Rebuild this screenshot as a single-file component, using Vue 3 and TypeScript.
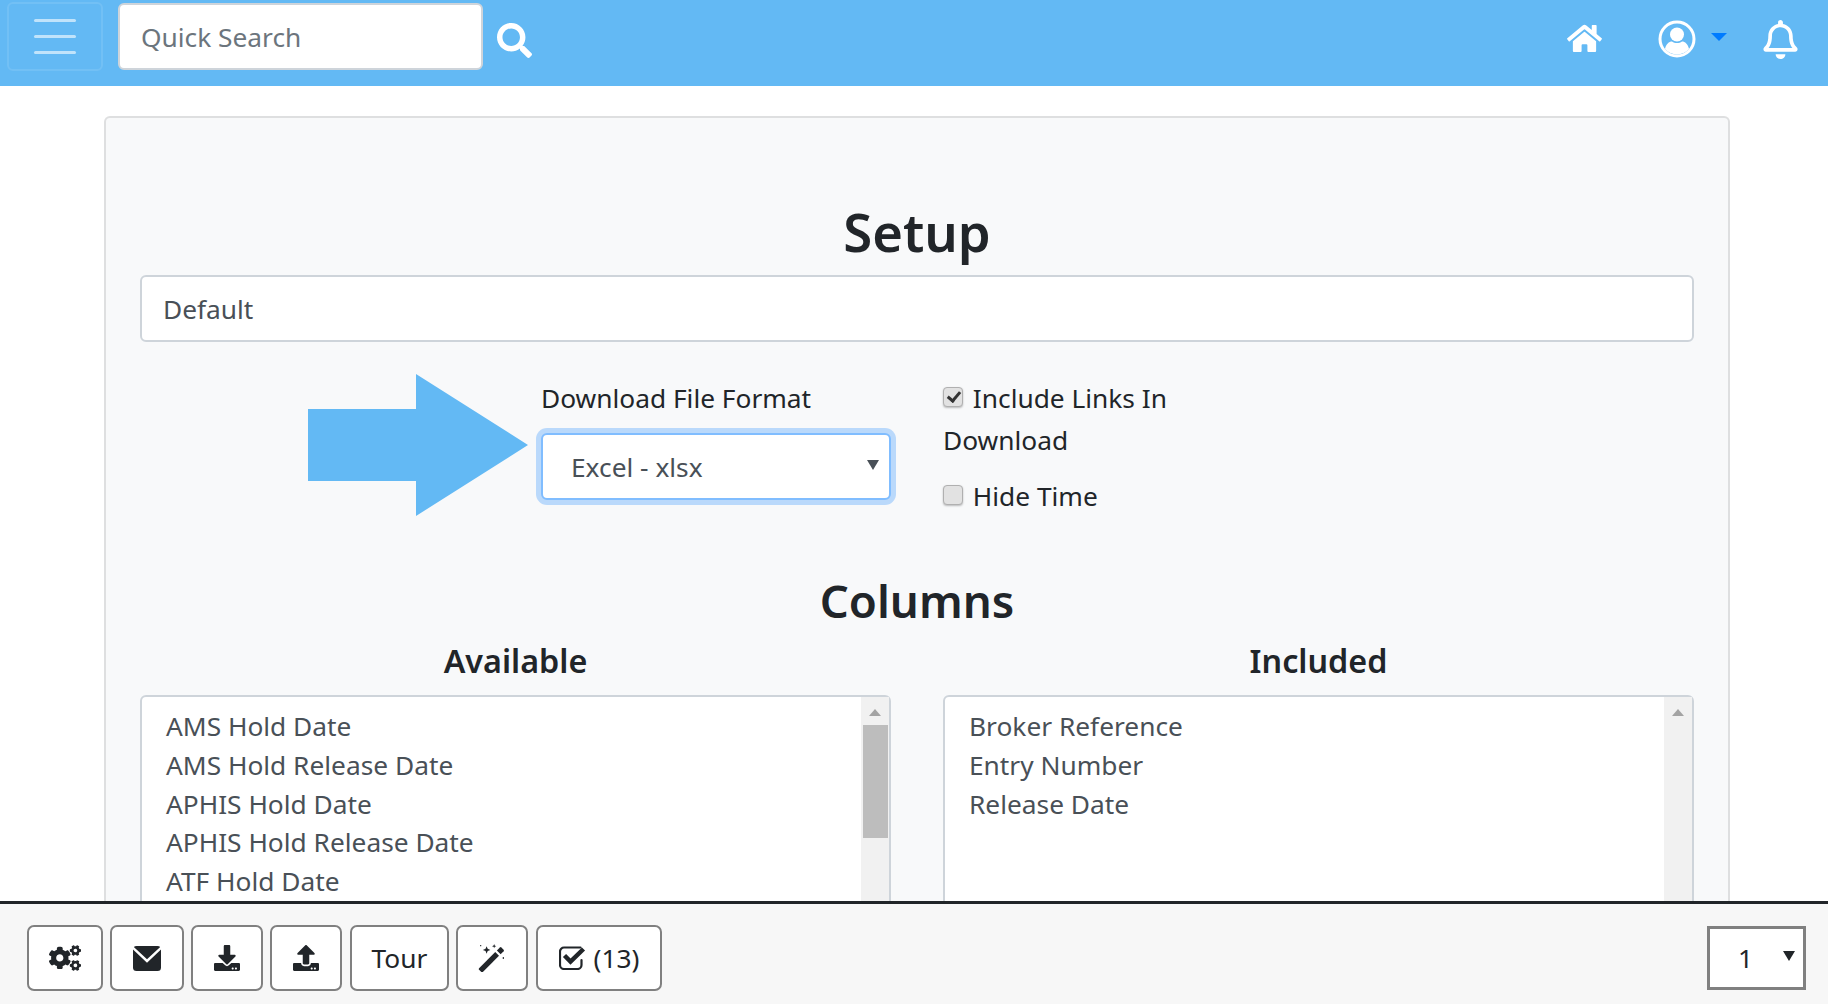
<script setup lang="ts">
const available: string[] = [
  'AMS Hold Date',
  'AMS Hold Release Date',
  'APHIS Hold Date',
  'APHIS Hold Release Date',
  'ATF Hold Date',
];
const included: string[] = ['Broker Reference', 'Entry Number', 'Release Date'];
</script>

<template>
  <div class="page">
    <nav class="navbar">
      <button class="menu-btn" aria-label="menu">
        <span></span><span></span><span></span>
      </button>
      <input class="search" type="text" placeholder="Quick Search" />
      <svg class="search-icon" viewBox="0 0 512 512">
        <path fill="#fff" d="M505 442.7L405.3 343c-4.5-4.5-10.6-7-17-7H372c27.6-35.3 44-79.7 44-128C416 93.1 322.9 0 208 0S0 93.1 0 208s93.1 208 208 208c48.3 0 92.7-16.4 128-44v16.3c0 6.4 2.5 12.5 7 17l99.7 99.7c9.4 9.4 24.6 9.4 33.9 0l28.3-28.3c9.4-9.4 9.4-24.6.1-34zM208 336c-70.7 0-128-57.2-128-128 0-70.7 57.2-128 128-128 70.7 0 128 57.2 128 128 0 70.7-57.2 128-128 128z" />
      </svg>
      <div class="nav-right">
        <svg class="home" viewBox="0 0 576 512">
          <path fill="#fff" d="M280.37 148.26L96 300.11V464a16 16 0 0 0 16 16l112.06-.29a16 16 0 0 0 15.92-16V368a16 16 0 0 1 16-16h64a16 16 0 0 1 16 16v95.64a16 16 0 0 0 16 16.05L464 480a16 16 0 0 0 16-16V300L295.67 148.26a12.19 12.19 0 0 0-15.3 0zM571.6 251.47L488 182.56V44.05a12 12 0 0 0-12-12h-56a12 12 0 0 0-12 12v72.61L318.47 43a48 48 0 0 0-61 0L4.34 251.47a12 12 0 0 0-1.6 16.9l25.5 31A12 12 0 0 0 45.15 301l235.22-193.74a12.19 12.19 0 0 1 15.3 0L530.9 301a12 12 0 0 0 16.9-1.6l25.5-31a12 12 0 0 0-1.7-16.93z" />
        </svg>
        <svg class="user" viewBox="0 0 38 38">
          <circle cx="19" cy="19" r="17" fill="none" stroke="#fff" stroke-width="3" />
          <circle cx="19" cy="14.5" r="7" fill="#fff" />
          <path fill="#fff" d="M7 29c1-5 4-7.500 7-7.500 1.500 1 3.200 1.500 5 1.500s3.500-.5 5-1.500c3 0 6 2.500 7 7.500-3 3.400-7.300 5.500-12 5.500s-9-2.100-12-5.500z" />
        </svg>
        <span class="caret"></span>
        <svg class="bell" viewBox="0 0 448 512">
          <path fill="#fff" d="M439.39 362.29c-19.32-20.76-55.47-51.99-55.47-154.29 0-77.7-54.48-139.9-127.94-155.16V32c0-17.67-14.32-32-31.98-32s-31.98 14.33-31.98 32v20.84C118.56 68.1 64.08 130.3 64.08 208c0 102.3-36.15 133.53-55.47 154.29-6 6.45-8.66 14.16-8.61 21.71.11 16.4 12.98 32 32.1 32h383.8c19.12 0 32-15.6 32.1-32 .05-7.55-2.61-15.27-8.61-21.71zM67.53 368c21.22-27.97 44.42-74.33 44.53-159.42 0-.2-.06-.38-.06-.58 0-61.86 50.14-112 112-112s112 50.14 112 112c0 .2-.06.38-.06.58.11 85.1 23.31 131.46 44.53 159.42H67.53zM224 512c35.32 0 63.97-28.65 63.97-64H160.03c0 35.35 28.65 64 63.97 64z" />
        </svg>
      </div>
    </nav>

    <main class="content">
      <section class="card">
        <h1 class="title">Setup</h1>
        <input class="field" type="text" value="Default" />

        <div class="format-row">
          <svg class="pointer" viewBox="0 0 220 142">
            <path fill="#63b9f4" d="M0 35H108V0L220 71 108 142V107H0z" />
          </svg>
          <div class="format-col">
            <label class="format-label">Download File Format</label>
            <div class="select-wrap">
              <select class="format-select">
                <option>Excel - xlsx</option>
              </select>
            </div>
          </div>
          <div class="checks">
            <label class="check-line">
              <input type="checkbox" checked />
              Include Links In Download
            </label>
            <label class="check-line">
              <input type="checkbox" />
              Hide Time
            </label>
          </div>
        </div>

        <h2 class="columns-title">Columns</h2>
        <div class="columns">
          <div class="col">
            <h3 class="col-title">Available</h3>
            <div class="listbox">
              <ul>
                <li v-for="item in available" :key="item">{{ item }}</li>
              </ul>
              <div class="scrollbar">
                <i class="up"></i>
                <b class="thumb"></b>
              </div>
            </div>
          </div>
          <div class="col">
            <h3 class="col-title">Included</h3>
            <div class="listbox">
              <ul>
                <li v-for="item in included" :key="item">{{ item }}</li>
              </ul>
              <div class="scrollbar">
                <i class="up"></i>
              </div>
            </div>
          </div>
        </div>
      </section>
    </main>

    <footer class="toolbar">
      <button class="tool w-gears">
        <svg viewBox="0 0 640 512" width="32" height="26">
          <path fill="#212529" d="M512.1 191l-8.2 14.3c-3 5.3-9.4 7.5-15.1 5.4-11.8-4.4-22.6-10.7-32.1-18.6-4.6-3.8-5.8-10.5-2.8-15.7l8.2-14.3c-6.9-8-12.3-17.3-15.9-27.4h-16.5c-6 0-11.2-4.3-12.2-10.3-2-12-2.1-24.6 0-37.1 1-6 6.2-10.4 12.2-10.4h16.5c3.6-10.1 9-19.4 15.9-27.4l-8.2-14.3c-3-5.2-1.9-11.9 2.8-15.7 9.5-7.9 20.4-14.2 32.1-18.6 5.7-2.1 12.1.1 15.1 5.4l8.2 14.3c10.5-1.9 21.2-1.9 31.7 0L552 6.3c3-5.3 9.4-7.5 15.1-5.4 11.8 4.4 22.6 10.7 32.1 18.6 4.6 3.8 5.8 10.5 2.8 15.7l-8.2 14.3c6.9 8 12.3 17.3 15.9 27.4h16.5c6 0 11.2 4.3 12.2 10.3 2 12 2.1 24.6 0 37.1-1 6-6.2 10.4-12.2 10.4h-16.5c-3.6 10.1-9 19.4-15.9 27.4l8.2 14.3c3 5.2 1.9 11.9-2.8 15.7-9.5 7.9-20.4 14.2-32.1 18.6-5.7 2.1-12.1-.1-15.1-5.4l-8.2-14.3c-10.4 1.9-21.2 1.9-31.7 0zm-10.5-58.8c38.5 29.6 82.4-14.3 52.8-52.8-38.5-29.7-82.4 14.3-52.8 52.8zM386.3 286.1l33.7 16.8c10.1 5.8 14.5 18.1 10.5 29.1-8.9 24.2-26.4 46.4-42.6 65.8-7.4 8.9-20.2 11.1-30.3 5.3l-29.1-16.8c-16 13.7-34.6 24.6-54.9 31.7v33.6c0 11.6-8.3 21.6-19.7 23.6-24.6 4.2-50.4 4.4-75.9 0-11.5-2-20-11.9-20-23.6V418c-20.3-7.2-38.9-18-54.9-31.7L74 403c-10 5.8-22.9 3.6-30.3-5.3-16.2-19.4-33.3-41.6-42.2-65.7-4-10.9.4-23.2 10.5-29.1l33.3-16.8c-3.9-20.9-3.9-42.4 0-63.4L12 205.8c-10.1-5.8-14.6-18.1-10.5-29 8.9-24.2 26-46.4 42.2-65.8 7.4-8.9 20.2-11.1 30.3-5.3l29.1 16.8c16-13.7 34.6-24.6 54.9-31.7V57.1c0-11.5 8.2-21.5 19.6-23.5 24.6-4.2 50.5-4.4 76-.1 11.5 2 20 11.9 20 23.6v33.6c20.3 7.2 38.9 18 54.9 31.7l29.1-16.8c10-5.8 22.9-3.6 30.3 5.3 16.2 19.4 33.2 41.6 42.1 65.8 4 10.9.1 23.2-10 29.1l-33.7 16.8c3.9 21 3.9 42.5 0 63.5zm-117.6 21.1c59.2-77-28.7-164.9-105.7-105.7-59.2 77 28.7 164.9 105.7 105.7zm243.4 182.7l-8.2 14.3c-3 5.3-9.4 7.5-15.1 5.4-11.8-4.4-22.6-10.7-32.1-18.6-4.6-3.8-5.8-10.5-2.8-15.7l8.2-14.3c-6.9-8-12.3-17.3-15.9-27.4h-16.5c-6 0-11.2-4.3-12.2-10.3-2-12-2.1-24.6 0-37.1 1-6 6.2-10.4 12.2-10.4h16.5c3.6-10.1 9-19.4 15.9-27.4l-8.2-14.3c-3-5.2-1.9-11.9 2.8-15.7 9.5-7.9 20.4-14.2 32.1-18.6 5.7-2.1 12.1.1 15.1 5.4l8.2 14.3c10.5-1.9 21.2-1.9 31.7 0l8.2-14.3c3-5.3 9.4-7.5 15.1-5.4 11.8 4.4 22.6 10.7 32.1 18.6 4.6 3.8 5.8 10.5 2.8 15.7l-8.2 14.3c6.9 8 12.3 17.3 15.9 27.4h16.5c6 0 11.2 4.3 12.2 10.3 2 12 2.1 24.6 0 37.1-1 6-6.2 10.4-12.2 10.4h-16.5c-3.6 10.1-9 19.4-15.9 27.4l8.2 14.3c3 5.2 1.9 11.9-2.8 15.7-9.5 7.9-20.4 14.2-32.1 18.6-5.7 2.1-12.1-.1-15.1-5.4l-8.2-14.3c-10.4 1.9-21.2 1.9-31.7 0zM501.6 431c38.5 29.6 82.4-14.3 52.8-52.8-38.5-29.6-82.4 14.3-52.8 52.8z" />
        </svg>
      </button>
      <button class="tool w-mail">
        <svg viewBox="0 0 28 28" width="28" height="28">
          <rect x="0" y="2" width="28" height="25" rx="3.500" fill="#212529" />
          <path d="M-1 3l15 14L29 3" fill="none" stroke="#fff" stroke-width="2.400" />
        </svg>
      </button>
      <button class="tool w-load">
        <svg viewBox="0 0 512 512" width="26" height="26">
          <path fill="#212529" d="M216 0h80c13.3 0 24 10.7 24 24v168h87.7c17.8 0 26.7 21.5 14.1 34.1L269.7 378.3c-7.5 7.5-19.8 7.5-27.3 0L90.1 226.1c-12.6-12.6-3.7-34.1 14.1-34.1H192V24c0-13.3 10.7-24 24-24zm296 376v112c0 13.3-10.7 24-24 24H24c-13.3 0-24-10.7-24-24V376c0-13.3 10.700-24 24-24h146.700l49 49c20.100 20.100 52.500 20.100 72.600 0l49-49H488c13.300 0 24 10.700 24 24zm-124 88c0-11-9-20-20-20s-20 9-20 20 9 20 20 20 20-9 20-20zm64 0c0-11-9-20-20-20s-20 9-20 20 9 20 20 20 20-9 20-20z" />
        </svg>
      </button>
      <button class="tool w-load">
        <svg viewBox="0 0 512 512" width="26" height="26">
          <path fill="#212529" d="M296 384h-80c-13.300 0-24-10.700-24-24V192h-87.700c-17.800 0-26.700-21.500-14.100-34.100L242.300 5.700c7.500-7.500 19.800-7.500 27.300 0l152.200 152.200c12.600 12.600 3.700 34.100-14.100 34.100H320v168c0 13.300-10.700 24-24 24zm216-8v112c0 13.300-10.700 24-24 24H24c-13.300 0-24-10.700-24-24V376c0-13.300 10.700-24 24-24h136v8c0 30.900 25.100 56 56 56h80c30.900 0 56-25.100 56-56v-8h136c13.300 0 24 10.700 24 24zm-124 88c0-11-9-20-20-20s-20 9-20 20 9 20 20 20 20-9 20-20zm64 0c0-11-9-20-20-20s-20 9-20 20 9 20 20 20 20-9 20-20z" />
        </svg>
      </button>
      <button class="tool w-tour">Tour</button>
      <button class="tool w-wand">
        <svg viewBox="0 0 26 26" width="28" height="28">
          <path fill="#212529" d="M1 22.500l15-15 3.500 3.500-15 15a1 1 0 0 1-1.400 0l-2.100-2.100a1 1 0 0 1 0-1.400z" />
          <path fill="#212529" d="M17.500 6l2.800-2.800a1 1 0 0 1 1.400 0l2.100 2.100a1 1 0 0 1 0 1.400L21 9.500z" />
          <path fill="#212529" d="M8 2l1 2.500 2.500 1-2.500 1-1 2.500-1-2.500-2.500-1 2.500-1zM15 0l.5 1.500 1.500.5-1.500.5-.5 1.500-.5-1.500-1.500-.5 1.500-.5zM2 1h1v1H2zM23 12h1v2h-1z" />
        </svg>
      </button>
      <button class="tool w-check">
        <svg viewBox="0 0 27 24" width="27" height="24">
          <path fill="none" stroke="#212529" stroke-width="2.200" stroke-linecap="round" d="M21.500 1.500H5a4 4 0 0 0-4 4v13.500a4 4 0 0 0 4 4h13.500a4 4 0 0 0 4-4v-5" />
          <path fill="none" stroke="#212529" stroke-width="4.500" d="M5.500 9.500l6 6L24.500 3" />
        </svg>
        <span>(13)</span>
      </button>
      <div class="page-select">
        <select>
          <option>1</option>
        </select>
      </div>
    </footer>
  </div>
</template>

<style>
html,
body {
  margin: 0;
  height: 100%;
  overflow: hidden;
  background: #fff;
}
</style>

<style scoped>
.page {
  height: 100vh;
  overflow: hidden;
  font-family: "Noto Sans", "Open Sans", "Liberation Sans", sans-serif;
  font-size: 26.300px;
  color: #212529;
}

.navbar {
  height: 86px;
  box-sizing: border-box;
  background: #63b9f4;
  display: flex;
  align-items: flex-start;
  padding: 2px 30px 0 7px;
}
.menu-btn {
  width: 96px;
  height: 69px;
  box-sizing: border-box;
  background: transparent;
  border: 2px solid rgba(255, 255, 255, 0.1);
  border-radius: 6px;
  display: flex;
  flex-direction: column;
  align-items: center;
  justify-content: center;
  gap: 13px;
  padding: 0;
}
.menu-btn span {
  display: block;
  width: 42px;
  height: 3px;
  border-radius: 2px;
  background: rgba(255, 255, 255, 0.6);
}
.search {
  width: 365px;
  height: 67px;
  box-sizing: border-box;
  margin: 1px 0 0 15px;
  border: 2px solid #ced4da;
  border-radius: 6px;
  background: #fff;
  padding: 0 21px;
  font: inherit;
  color: #495057;
  outline: none;
}
.search::placeholder {
  color: #6c757d;
  opacity: 1;
}
.search-icon {
  width: 35px;
  height: 35px;
  margin: 21px 0 0 14px;
}
.nav-right {
  margin-left: auto;
  display: flex;
  align-items: flex-start;
}
.home {
  width: 35px;
  height: 31px;
  margin-top: 21px;
}
.user {
  width: 38px;
  height: 38px;
  margin: 18px 0 0 56px;
}
.caret {
  width: 0;
  height: 0;
  margin: 31px 0 0 15px;
  border-left: 8px solid transparent;
  border-right: 8px solid transparent;
  border-top: 8px solid #007bff;
}
.bell {
  width: 35px;
  height: 39px;
  margin: 18px 0 0 36px;
}

.content {
  padding: 30px 98px 0 104px;
}
.card {
  box-sizing: border-box;
  height: 900px;
  background: #f8f9fa;
  border: 2px solid rgba(0, 0, 0, 0.1);
  border-radius: 6px;
  padding: 0 34px;
}
.title {
  margin: 77px 0 0;
  font-size: 52.600px;
  line-height: 74px;
  font-weight: 600;
  text-align: center;
}
.field {
  display: block;
  width: 100%;
  height: 67px;
  box-sizing: border-box;
  margin-top: 6px;
  border: 2px solid #ced4da;
  border-radius: 6px;
  background: #fff;
  padding: 0 21px;
  font: inherit;
  color: #495057;
  outline: none;
}

.format-row {
  position: relative;
  display: flex;
  margin-top: 35px;
  padding-left: 401px;
}
.pointer {
  position: absolute;
  left: 168px;
  top: -3px;
  width: 220px;
  height: 142px;
}
.format-col {
  width: 350px;
}
.format-label {
  display: block;
  line-height: 42px;
}
.select-wrap {
  position: relative;
  margin-top: 14px;
}
.select-wrap::after {
  content: "";
  position: absolute;
  right: 12px;
  top: 27px;
  border-left: 6px solid transparent;
  border-right: 6px solid transparent;
  border-top: 10px solid #495057;
}
.format-select {
  display: block;
  width: 100%;
  height: 67px;
  box-sizing: border-box;
  appearance: none;
  background: #fff;
  border: 2px solid #80bdff;
  border-radius: 6px;
  box-shadow: 0 0 0 5px rgba(0, 123, 255, 0.25);
  padding: 0 28px;
  font: inherit;
  color: #495057;
  outline: none;
}
.checks {
  width: 260px;
  margin-left: 52px;
}
.check-line {
  display: block;
  line-height: 42px;
  margin-bottom: 14px;
}
.check-line input {
  appearance: none;
  position: relative;
  box-sizing: border-box;
  width: 20px;
  height: 20px;
  margin: 0 3px 0 0;
  vertical-align: 1px;
  background: #e2e2e2;
  border: 1px solid #b0b0b0;
  border-radius: 4px;
  box-shadow: 0 1px 2px rgba(0, 0, 0, 0.25);
}
.check-line input:checked::after {
  content: "";
  position: absolute;
  left: 6px;
  top: 1px;
  width: 5px;
  height: 10px;
  border: solid #333;
  border-width: 0 3px 3px 0;
  transform: rotate(40deg);
}

.columns-title {
  margin: 40px 0 0;
  font-size: 45.600px;
  line-height: 58px;
  font-weight: 600;
  text-align: center;
}
.columns {
  display: grid;
  grid-template-columns: 751px 751px;
  column-gap: 52px;
}
.col-title {
  margin: 9px 0 0;
  font-size: 32.300px;
  line-height: 44px;
  font-weight: 600;
  text-align: center;
}
.listbox {
  display: flex;
  height: 300px;
  box-sizing: border-box;
  margin-top: 13px;
  background: #fff;
  border: 2px solid #ced4da;
  border-radius: 6px;
}
.listbox ul {
  flex: 1;
  list-style: none;
  margin: 0;
  padding: 10px 24px;
  color: #495057;
}
.listbox li {
  height: 38.800px;
  line-height: 38.800px;
}
.scrollbar {
  width: 28px;
  margin-right: 0;
  background: #f1f1f1;
  display: flex;
  flex-direction: column;
  align-items: center;
}
.up {
  width: 0;
  height: 0;
  margin-top: 12px;
  border-left: 6px solid transparent;
  border-right: 6px solid transparent;
  border-bottom: 7px solid #a3a3a3;
}
.thumb {
  width: 25px;
  height: 113px;
  margin-top: 9px;
  background: #bdbdbd;
}

.toolbar {
  position: fixed;
  left: 0;
  right: 0;
  bottom: 0;
  height: 103px;
  box-sizing: border-box;
  background: #f7f7f7;
  border-top: 3px solid #212529;
  display: flex;
  align-items: flex-start;
  gap: 7px;
  padding: 21px 22px 0 27px;
}
.tool {
  height: 66px;
  box-sizing: border-box;
  background: #fff;
  border: 2px solid #808080;
  border-radius: 7px;
  font: inherit;
  color: #212529;
  display: flex;
  align-items: center;
  justify-content: center;
  gap: 8px;
  padding: 0;
}
.w-gears { width: 76px; }
.w-mail { width: 74px; }
.w-load { width: 72px; }
.w-tour { width: 99px; margin-left: 1px; }
.w-wand { width: 72px; }
.w-check { width: 126px; margin-left: 1px; }
.page-select {
  position: relative;
  margin-left: auto;
  margin-top: 1px;
}
.page-select::after {
  content: "";
  position: absolute;
  right: 11px;
  top: 25px;
  border-left: 6px solid transparent;
  border-right: 6px solid transparent;
  border-top: 10px solid #212529;
}
.page-select select {
  display: block;
  width: 99px;
  height: 64px;
  box-sizing: border-box;
  appearance: none;
  background: #fff;
  border: 3px solid #808080;
  border-radius: 0;
  padding: 0 28px;
  font: inherit;
  color: #212529;
  outline: none;
}
</style>
